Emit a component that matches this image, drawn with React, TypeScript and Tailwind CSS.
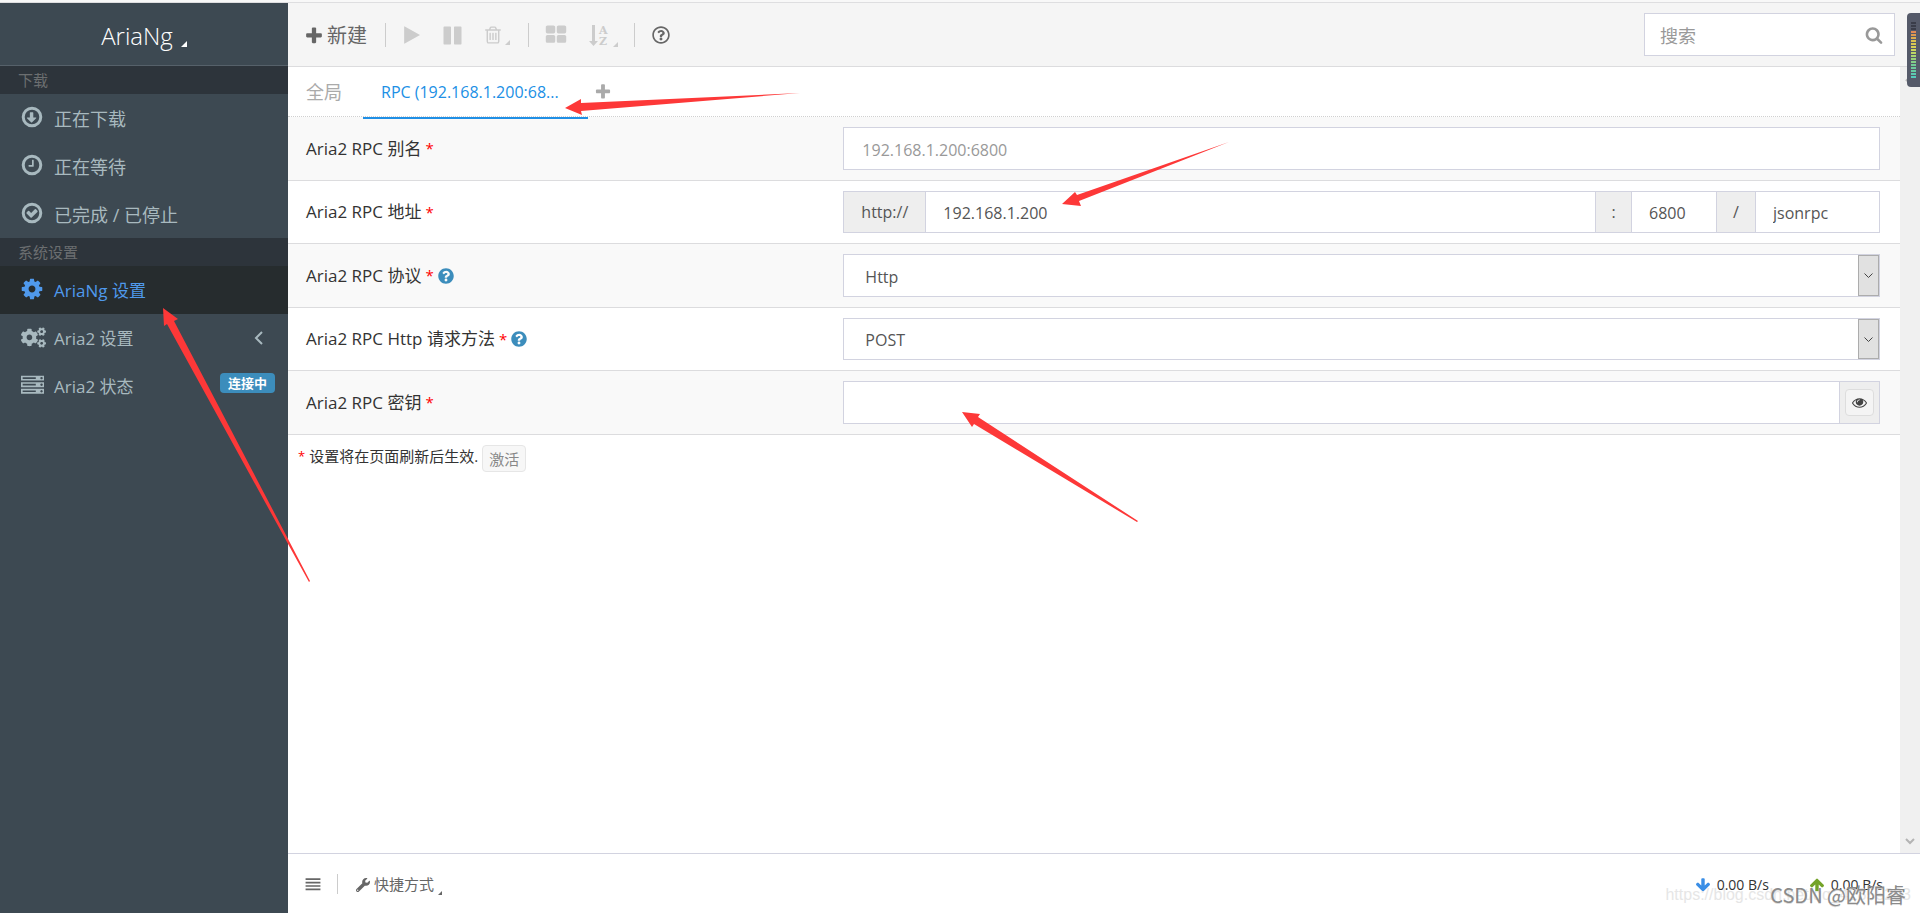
import type { ReactNode } from "react";
import clsx from "clsx";
import { FaCogs, FaQuestionCircle, FaRegQuestionCircle, FaWrench } from "react-icons/fa";

const paths = {
  down: "M1216 960q0 14-10 24l-319 319q-11 9-23 9t-23-9l-320-320q-15-16-7-35 8-20 30-20h192v-352q0-14 9-23t23-9h192q14 0 23 9t9 23v352h192q14 0 23 9t9 23z",
  clock: "M1024 544v448q0 14-9 23t-23 9h-320q-14 0-23-9t-9-23v-64q0-14 9-23t23-9h224v-352q0-14 9-23t23-9h64q14 0 23 9t9 23z",
  check: "M1299 813l-422 422q-19 19-45 19t-45-19l-294-294q-19-19-19-45t19-45l102-102q19-19 45-19t45 19l147 147 275-275q19-19 45-19t45 19l102 102q19 19 19 45t-19 45z",
  cog: "M1152 896q0-106-75-181t-181-75-181 75-75 181 75 181 181 75 181-75 75-181zm512-109v222q0 12-8 23t-20 13l-185 28q-19 54-39 91 35 50 107 138 10 12 10 25t-9 23q-27 37-99 108t-94 71q-12 0-26-9l-138-108q-44 23-91 38-16 136-29 186-7 28-36 28h-222q-14 0-24.500-8.500t-11.500-21.500l-28-184q-49-16-90-37l-141 107q-10 9-25 9-14 0-25-11-126-114-165-168-7-10-7-23 0-12 8-23 15-21 51-66.500t54-70.500q-27-50-41-99l-183-27q-13-2-21-12.500t-8-23.500v-222q0-12 8-23t19-13l186-28q14-46 39-92-40-57-107-138-10-12-10-24 0-10 9-23 26-36 98.500-107.500t94.500-71.500q13 0 26 10l138 107q44-23 91-38 16-136 29-186 7-28 36-28h222q14 0 24.500 8.500t11.500 21.500l28 184q49 16 90 37l142-107q9-9 24-9 13 0 25 10 129 119 165 170 7 8 7 22 0 12-8 23-15 21-51 66.500t-54 70.500q26 50 41 98l183 28q13 2 21 12.500t8 23.500z",
  server: "M128 1408h1024v-128h-1024v128zm0-512h1024v-128h-1024v128zm1568 448q0-40-28-68t-68-28-68 28-28 68 28 68 68 28 68-28 28-68zm-1568-960h1024v-128h-1024v128zm1568 448q0-40-28-68t-68-28-68 28-28 68 28 68 68 28 68-28 28-68zm0-512q0-40-28-68t-68-28-68 28-28 68 28 68 68 28 68-28 28-68zm96 832v384h-1792v-384h1792zm0-512v384h-1792v-384h1792zm0-512v384h-1792v-384h1792z",
  plus: "M1600 736v192q0 40-28 68t-68 28h-416v416q0 40-28 68t-68 28h-192q-40 0-68-28t-28-68v-416h-416q-40 0-68-28t-28-68v-192q0-40 28-68t68-28h416v-416q0-40 28-68t68-28h192q40 0 68 28t28 68v416h416q40 0 68 28t28 68z",
  play: "M1576 927l-1328 738q-23 13-39.500 3t-16.500-36v-1472q0-26 16.500-36t39.500 3l1328 738q23 13 23 31t-23 31z",
  pause: "M1664 192v1408q0 26-19 45t-45 19h-512q-26 0-45-19t-19-45v-1408q0-26 19-45t45-19h512q26 0 45 19t19 45zm-896 0v1408q0 26-19 45t-45 19h-512q-26 0-45-19t-19-45v-1408q0-26 19-45t45-19h512q26 0 45 19t19 45z",
  trash: "M704 736v576q0 14-9 23t-23 9h-64q-14 0-23-9t-9-23v-576q0-14 9-23t23-9h64q14 0 23 9t9 23zm256 0v576q0 14-9 23t-23 9h-64q-14 0-23-9t-9-23v-576q0-14 9-23t23-9h64q14 0 23 9t9 23zm256 0v576q0 14-9 23t-23 9h-64q-14 0-23-9t-9-23v-576q0-14 9-23t23-9h64q14 0 23 9t9 23zm128 724v-948h-896v948q0 22 7 40.500t14.500 27 10.500 8.500h832q3 0 10.500-8.500t14.500-27 7-40.500zm-672-1076h448l-48-117q-7-9-17-11h-317q-10 2-17 11zm928 32v64q0 14-9 23t-23 9h-96v948q0 83-47 143.500t-113 60.500h-832q-66 0-113-58.500t-47-141.500v-952h-96q-14 0-23-9t-9-23v-64q0-14 9-23t23-9h309l70-167q15-37 54-63t79-26h320q40 0 79 26t54 63l70 167h309q14 0 23 9t9 23z",
  grid: "M832 1024v384q0 52-38 90t-90 38h-512q-52 0-90-38t-38-90v-384q0-52 38-90t90-38h512q52 0 90 38t38 90zm0-768v384q0 52-38 90t-90 38h-512q-52 0-90-38t-38-90v-384q0-52 38-90t90-38h512q52 0 90 38t38 90zm896 768v384q0 52-38 90t-90 38h-512q-52 0-90-38t-38-90v-384q0-52 38-90t90-38h512q52 0 90 38t38 90zm0-768v384q0 52-38 90t-90 38h-512q-52 0-90-38t-38-90v-384q0-52 38-90t90-38h512q52 0 90 38t38 90z",
  search: "M1216 832q0-185-131.500-316.500t-316.500-131.500-316.500 131.500-131.500 316.500 131.500 316.500 316.500 131.500 316.500-131.500 131.500-316.500zm512 832q0 52-38 90t-90 38q-54 0-90-38l-343-342q-179 124-399 124-143 0-273.500-55.500t-225-150-150-225-55.500-273.500 55.500-273.500 150-225 225-150 273.500-55.500 273.500 55.500 225 150 150 225 55.500 273.500q0 220-124 399l343 343q37 37 37 90z",
  eye: "M1664 960q-152-236-381-353 61 104 61 225 0 185-131.500 316.500t-316.500 131.500-316.500-131.500-131.500-316.500q0-121 61-225-229 117-381 353 133 205 333.500 326.500t434.500 121.500 434.500-121.500 333.500-326.500zm-720-384q0-20-14-34t-34-14q-125 0-214.500 89.500t-89.500 214.500q0 20 14 34t34 14 34-14 14-34q0-86 61-147t147-61q20 0 34-14t14-34zm848 384q0 34-20 69-140 230-376.500 368.500t-499.500 138.500-499.500-139-376.500-368q-20-35-20-69t20-69q140-229 376.500-368t499.500-139 499.500 139 376.500 368q20 35 20 69z",
  bars: "M64 256h1664v192h-1664zM64 640h1664v192h-1664zM64 1024h1664v192h-1664zM64 1408h1664v192h-1664z",
  arrow: "M1675 832q0 53-37 90l-651 652q-39 37-91 37-53 0-90-37l-651-652q-38-36-38-90 0-53 38-91l74-75q39-37 91-37 53 0 90 37l294 294v-704q0-52 38-90t90-38h128q52 0 90 38t38 90v704l294-294q37-37 90-37 52 0 91 37l75 75q37 39 37 91z",
};

function Icon({ name, size = 20, ring = false, className = "" }: { name: keyof typeof paths; size?: number; ring?: boolean; className?: string }) {
  return (
    <svg width={size} height={size} viewBox="0 0 1792 1792" fill="currentColor" className={clsx("shrink-0", className)} aria-hidden="true">
      {ring && <circle cx="896" cy="896" r="656" fill="none" stroke="currentColor" strokeWidth="224" />}
      <path d={paths[name]} />
    </svg>
  );
}

function Corner({ size = 5, className = "" }: { size?: number; className?: string }) {
  return (
    <svg width={size} height={size} viewBox="0 0 6 6" fill="currentColor" className={clsx("shrink-0", className)} aria-hidden="true">
      <path d="M6 0v6H0z" />
    </svg>
  );
}

function SortIcon() {
  return (
    <svg width="20" height="24" viewBox="0 0 20 24" fill="currentColor" className="shrink-0" aria-hidden="true">
      <path d="M3 2h3v16h3l-4.500 5L0 18h3z" />
      <text x="10" y="11" className="font-['DejaVu_Serif'] text-[11px] font-bold">A</text>
      <text x="10" y="22" className="font-['DejaVu_Serif'] text-[11px] font-bold">Z</text>
    </svg>
  );
}

function MenuItem({ icon, label, active = false, children }: { icon: ReactNode; label: string; active?: boolean; children?: ReactNode }) {
  return (
    <li>
      <a href="#" className={clsx("flex h-12 items-center pr-[13px] pl-5", active ? "bg-[#262c2e] text-[#4f99ec]" : "text-[#a8b9bf]")}>
        <span className="flex w-[34px] pb-[2px]">{icon}</span>
        <span className="flex-1 pt-[2px]">{label}</span>
        {children}
      </a>
    </li>
  );
}

function MenuHeading({ children }: { children: ReactNode }) {
  return <h2 className="flex h-7 items-center bg-[#2d343b] pl-[18px] text-[15px] text-[#6b6e70]">{children}</h2>;
}

function Row({ id, label, help = false, children }: { id: string; label: string; help?: boolean; children: ReactNode }) {
  return (
    <div className="flex border-b border-[#dcdcde] py-[10px] odd:h-16 odd:bg-[#f9f9f9] even:h-[63px]">
      <label htmlFor={id} className="flex w-1/3 items-center gap-1 pl-[18px] text-[#333]">
        {label}
        <span className="text-[15px] text-[#f00]">*</span>
        {help && <FaQuestionCircle size={16} className="text-[#3c8dbc]" />}
      </label>
      <div className="flex w-2/3 pr-5 pl-[18px]">{children}</div>
    </div>
  );
}

const field = "h-full min-w-0 border border-[#d2d3e0] bg-white pt-[2px] text-base text-[#555] outline-none placeholder:text-[#999]";
const addon = "flex h-full items-center justify-center border-y border-[#d2d3e0] bg-[#eee] text-base text-[#555]";

function SelectField({ id, options }: { id: string; options: string[] }) {
  return (
    <div className="relative w-full">
      <select id={id} className={clsx(field, "w-full appearance-none px-[21px]")}>
        {options.map((o) => (
          <option key={o}>{o}</option>
        ))}
      </select>
      <span className="pointer-events-none absolute inset-y-px right-px flex w-[21px] items-center justify-center border border-[#acacac] bg-[#e1e1e1]">
        <svg width="9" height="5" viewBox="0 0 9 5" fill="none" stroke="#444" aria-hidden="true">
          <path d="M.5.5l4 4 4-4" />
        </svg>
      </span>
    </div>
  );
}

function Divider({ className = "" }: { className?: string }) {
  return <span className={clsx("w-px bg-[#ccc]", className)} />;
}

const meter = ["#3a3d49", "#3a3d49", "#3a3d49", "#e08a55", "#dd9a50", "#dcae4e", "#dac250", "#d8c952", "#d6cf55", "#cbd65c", "#bcd765", "#a9d56f", "#97d27a", "#84cf87", "#73cc95", "#6ccb9c", "#66cba3", "#5ccbb0", "#55cbbb"];

export default function App() {
  return (
    <div className="relative flex h-screen flex-col overflow-hidden bg-white font-['Open_Sans','Noto_Sans_CJK_SC',sans-serif] text-[17px]">
      <div className="h-[3px] shrink-0 border-b border-[#dedee0] bg-[#f8f8f8]" />
      <div className="flex min-h-0 flex-1">
        <aside className="w-72 shrink-0 bg-[#3d4952]">
          <button className="flex h-[63px] w-full items-center justify-center border-b border-[#56616a] pt-1 text-2xl font-light text-white">
            AriaNg
            <Corner size={6} className="mt-4 ml-2" />
          </button>
          <MenuHeading>下载</MenuHeading>
          <ul className="text-lg">
            <MenuItem icon={<Icon name="down" ring size={24} />} label="正在下载" />
            <MenuItem icon={<Icon name="clock" ring size={24} />} label="正在等待" />
            <MenuItem icon={<Icon name="check" ring size={24} />} label="已完成 / 已停止" />
          </ul>
          <MenuHeading>系统设置</MenuHeading>
          <ul>
            <MenuItem icon={<Icon name="cog" size={24} />} label="AriaNg 设置" active />
            <MenuItem icon={<FaCogs size={25} className="ml-px" />} label="Aria2 设置">
              <svg width="9" height="14" viewBox="0 0 9 14" fill="none" stroke="currentColor" strokeWidth="2" className="mr-3" aria-hidden="true">
                <path d="M8 1L2 7l6 6" />
              </svg>
            </MenuItem>
            <MenuItem icon={<Icon name="server" size={23} className="ml-px" />} label="Aria2 状态">
              <span className="mb-[6px] rounded bg-[#3c8dbc] px-2 text-[13px] leading-5 font-bold text-white">连接中</span>
            </MenuItem>
          </ul>
        </aside>

        <main className="flex min-w-0 flex-1 flex-col">
          <header className="flex h-16 shrink-0 items-center border-b border-[#dcdcde] bg-[#f5f5f5] pr-[25px] pl-4 text-[#ccc]">
            <button className="flex items-center gap-[3px] pt-[2px] text-xl text-[#666]">
              <Icon name="plus" size={20} />
              新建
            </button>
            <Divider className="ml-[18px] h-6" />
            <button aria-label="play" className="ml-4 pt-px"><Icon name="play" size={20} /></button>
            <button aria-label="pause" className="ml-5 pt-px"><Icon name="pause" size={21} /></button>
            <button aria-label="delete" className="ml-5 flex items-end gap-[2px] pt-px"><Icon name="trash" size={20} /><Corner /></button>
            <Divider className="ml-[18px] h-6" />
            <button aria-label="view" className="ml-4"><Icon name="grid" size={22} /></button>
            <button aria-label="sort" className="ml-[22px] flex items-end gap-1 pt-px"><SortIcon /><Corner /></button>
            <Divider className="ml-4 h-6" />
            <button aria-label="help" className="ml-[17px] pt-px text-[#666]"><FaRegQuestionCircle size={18} /></button>
            <form className="ml-auto flex h-[43px] w-[251px] items-center border border-[#d2d3e0] bg-white pr-[11px] pl-[15px]">
              <input aria-label="搜索" placeholder="搜索" className="min-w-0 flex-1 pt-[2px] text-lg outline-none placeholder:text-[#999]" />
              <Icon name="search" size={18} className="text-[#999]" />
            </form>
          </header>

          <div className="flex min-h-0 flex-1">
            <section className="min-w-0 flex-1">
              <nav className="flex h-[50px] border-b border-dotted border-[#d0d0d0] text-[#aaa]">
                <a href="#" className="flex items-center px-[18px] text-lg">全局</a>
                <a href="#" className="-mb-[3px] ml-[3px] flex w-[225px] items-center border-b-2 border-[#208fe5] px-[18px] text-base text-[#208fe5]">RPC (192.168.1.200:68...</a>
                <button aria-label="add" className="ml-[6px]"><Icon name="plus" size={18} /></button>
              </nav>
              <div>
                <Row id="alias" label="Aria2 RPC 别名">
                  <input id="alias" placeholder="192.168.1.200:6800" className={clsx(field, "w-full px-[18px]")} />
                </Row>
                <Row id="host" label="Aria2 RPC 地址">
                  <span className={clsx(addon, "w-[82px] border-l")}>http://</span>
                  <input id="host" defaultValue="192.168.1.200" className={clsx(field, "flex-1 px-[17px]")} />
                  <span className={clsx(addon, "w-[35px]")}>:</span>
                  <input aria-label="port" defaultValue="6800" className={clsx(field, "w-[86px] px-[17px]")} />
                  <span className={clsx(addon, "w-[38px]")}>/</span>
                  <input aria-label="path" defaultValue="jsonrpc" className={clsx(field, "w-[125px] px-[17px]")} />
                </Row>
                <Row id="protocol" label="Aria2 RPC 协议" help>
                  <SelectField id="protocol" options={["Http", "Https", "WebSocket"]} />
                </Row>
                <Row id="method" label="Aria2 RPC Http 请求方法" help>
                  <SelectField id="method" options={["POST", "GET"]} />
                </Row>
                <Row id="secret" label="Aria2 RPC 密钥">
                  <input id="secret" type="password" className={clsx(field, "flex-1 px-[18px]")} />
                  <span className={clsx(addon, "w-10 border-r")}>
                    <button aria-label="show" className="flex h-[27px] w-[29px] items-center justify-center rounded border border-[#ddd] bg-[#f4f4f4] text-[#444]">
                      <Icon name="eye" size={15} />
                    </button>
                  </span>
                </Row>
              </div>
              <div className="flex items-center gap-1 px-[10px] pt-[10px] text-[15px] text-[#333]">
                <span className="pb-1 text-[13px] text-[#f00]">*</span>
                <span className="pb-1">设置将在页面刷新后生效.</span>
                <button className="h-[27px] rounded border border-[#e6e6e6] bg-[#f7f7f7] px-[6px] leading-5 text-[#888]">激活</button>
              </div>
            </section>
            <div className="flex w-5 flex-col items-center justify-between bg-[#f0f0f0] py-2 text-[#b4b4b4]">
              <svg width="10" height="7" viewBox="0 0 10 7" fill="none" stroke="currentColor" strokeWidth="2" aria-hidden="true">
                <path d="M1 6l4-4 4 4" />
              </svg>
              <svg width="10" height="7" viewBox="0 0 10 7" fill="none" stroke="currentColor" strokeWidth="2" aria-hidden="true">
                <path d="M1 1l4 4 4-4" />
              </svg>
            </div>
          </div>

          <footer className="flex h-[60px] shrink-0 items-center border-t border-[#d2d3e0] bg-white pr-[37px] pl-[17px] text-[15px] text-[#666]">
            <button aria-label="menu"><Icon name="bars" size={16} /></button>
            <Divider className="ml-4 h-5" />
            <button className="ml-[18px] flex items-center gap-1 pt-[2px]">
              <FaWrench size={14} />
              快捷方式
              <Corner size={4} className="mt-4" />
            </button>
            <div className="ml-auto flex items-center gap-10 pt-[2px] text-sm text-[#333]">
              <span className="flex items-center gap-[6px]">
                <Icon name="arrow" size={16} className="text-[#3a8ee6]" />
                0.00 B/s
              </span>
              <span className="flex items-center gap-[6px]">
                <Icon name="arrow" size={16} className="rotate-180 text-[#74a329]" />
                0.00 B/s
              </span>
            </div>
          </footer>
        </main>
      </div>

      {/* level meter docked on the right edge */}
      <div className="absolute top-[13px] right-0 flex h-[74px] w-[13px] flex-col items-center rounded-l bg-[#555a69] pt-[9px]">
        {meter.map((c, i) => (
          <span key={i} className="mb-px h-[2px] w-[5px] shrink-0" style={{ background: c }} />
        ))}
      </div>

      <svg width="1920" height="913" viewBox="0 0 1920 913" fill="#fd3838" className="pointer-events-none absolute top-0 left-0" aria-hidden="true">
        <path d="M565 108L581 99V103L800 93L581 111L582 115Z" />
        <path d="M1062 204L1075 192L1077 195L1229 142L1079 201L1081 206Z" />
        <path d="M962 412L980 414L978 417L1138 521L1137 522L974 424L972 427Z" />
        <path d="M163 308L178 319L174 321L310 581L309 582L167 324L164 326Z" />
      </svg>

      <span className="pointer-events-none absolute right-[9px] bottom-[6px] font-['Liberation_Sans'] text-base text-[#e6e6e6]">https://blog.csdn.net/qq_42855293</span>
      <span className="pointer-events-none absolute right-[14px] bottom-1 font-['Noto_Sans_CJK_SC'] text-xl leading-7 text-[#8a8a8a] text-shadow-2xs">CSDN @欧阳睿</span>
    </div>
  );
}
